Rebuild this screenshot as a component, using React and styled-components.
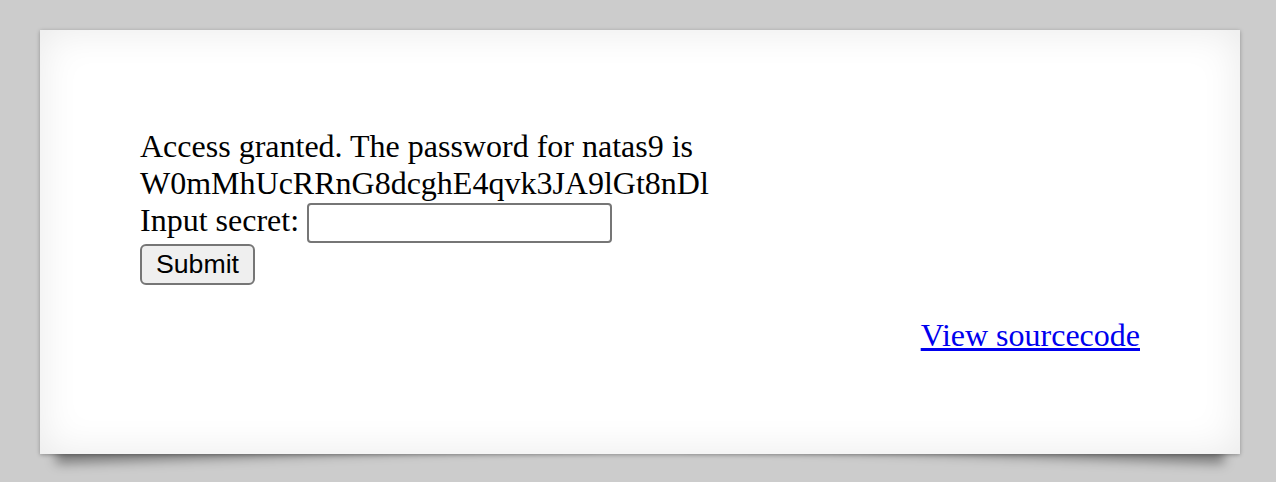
import React from 'react'
import styled, { createGlobalStyle } from 'styled-components'

const GlobalStyle = createGlobalStyle`
  html, body {
    margin: 0;
    padding: 0;
    background: #cccccc;
  }
  body {
    font-family: "Liberation Serif", "Times New Roman", serif;
    font-size: 32px;
    color: #000;
  }
`

const Page = styled.div`
  position: relative;
  z-index: 0;
  width: 1276px;
  height: 482px;
  padding-top: 30px;
  padding-left: 40px;
  box-sizing: border-box;
  overflow: hidden;
  background: #cccccc;
`

const Content = styled.div`
  position: relative;
  width: 1200px;
  box-sizing: border-box;
  padding: 98px 100px 100px;
  background: #fff;
  box-shadow: 0 1px 4px rgba(0, 0, 0, 0.3), 0 0 40px rgba(0, 0, 0, 0.09) inset;
  line-height: 37px;

  &::before,
  &::after {
    content: "";
    position: absolute;
    z-index: -1;
    bottom: 14px;
    width: 45%;
    height: 20%;
    background: #bbb;
    box-shadow: 0 14px 12px rgba(0, 0, 0, 0.4);
  }
  &::before {
    left: 14px;
    transform: rotate(-2deg);
  }
  &::after {
    right: 14px;
    transform: rotate(2deg);
  }
`

const Message = styled.div``

const Form = styled.form`
  margin: 0 0 32px;
`

const SecretInput = styled.input`
  box-sizing: border-box;
  width: 305px;
  height: 40px;
  margin: 0;
  padding: 2px 4px;
  border: 2px solid #767676;
  border-radius: 4px;
  background: #fff;
  font-family: "Liberation Sans", Arial, sans-serif;
  font-size: 26.67px;
  vertical-align: baseline;
`

const SubmitButton = styled.button`
  box-sizing: border-box;
  width: 115px;
  height: 41px;
  margin: 1px 0 0;
  padding: 0 12px;
  border: 2px solid #767676;
  border-radius: 6px;
  background: #efefef;
  color: #000;
  font-family: "Liberation Sans", Arial, sans-serif;
  font-size: 26.67px;
  line-height: 1;
  vertical-align: top;
`

const ViewSource = styled.div`
  text-align: right;
`

const SourceLink = styled.a`
  color: #0000ee;
  text-decoration: underline;
`

const App = () => {
  return (
    <>
      <GlobalStyle />
      <Page>
        <Content>
          <Message>
            Access granted. The password for natas9 is
            <br />
            W0mMhUcRRnG8dcghE4qvk3JA9lGt8nDl
          </Message>
          <Form onSubmit={(e) => e.preventDefault()}>
            Input secret: <SecretInput name="secret" />
            <br />
            <SubmitButton type="submit">Submit</SubmitButton>
          </Form>
          <ViewSource>
            <SourceLink href="#">View sourcecode</SourceLink>
          </ViewSource>
        </Content>
      </Page>
    </>
  )
}

export default App
